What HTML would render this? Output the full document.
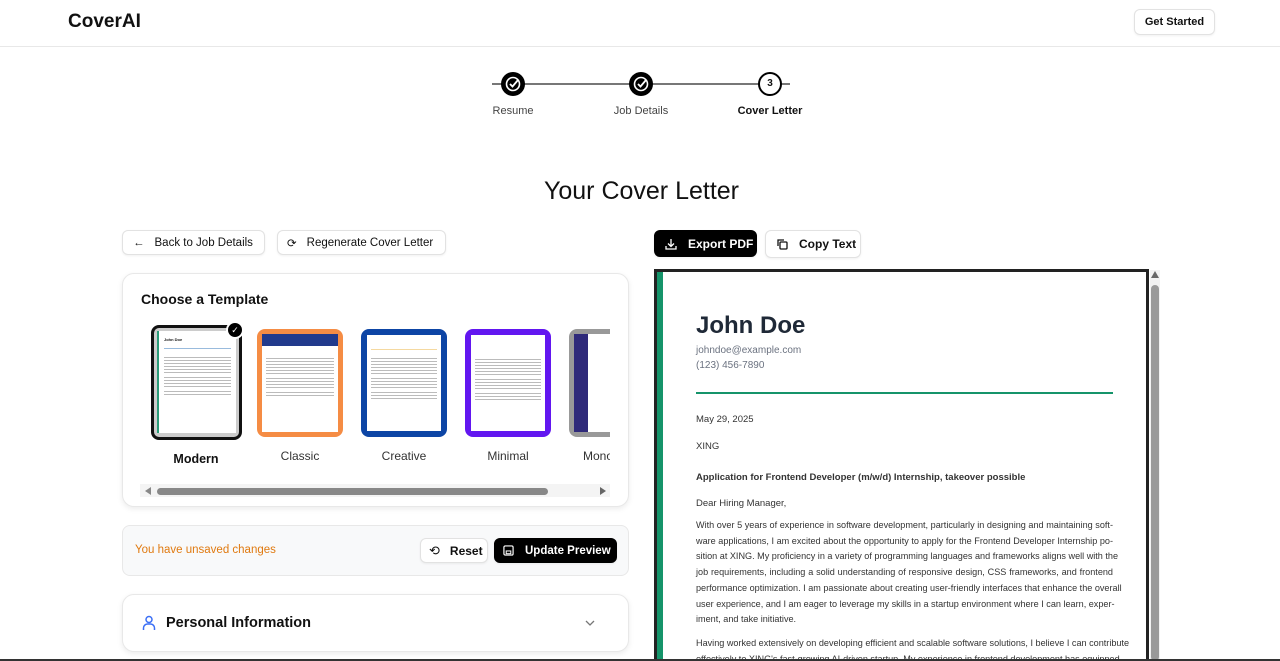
<!DOCTYPE html>
<html><head><meta charset="utf-8"><style>
*{box-sizing:border-box;margin:0;padding:0}
html,body{width:1280px;height:661px;overflow:hidden}
body{background:#fff;font-family:"Liberation Sans",sans-serif;color:#111;position:relative}
.a{position:absolute}
.btn{position:absolute;border:1px solid #e2e2e2;border-radius:6px;background:#fff;font-size:12px;font-weight:bold;display:flex;align-items:center;box-shadow:0 1px 2px rgba(0,0,0,.06);white-space:nowrap}
.card{position:absolute;border:1px solid #e8e8e8;border-radius:12px;background:#fff;box-shadow:0 2px 6px rgba(0,0,0,.08)}
.th{position:absolute;border-radius:8px;overflow:hidden}
.pg{position:absolute;background:#fff}
.ln{height:1px;background:#bbb;margin-bottom:2px}
.lbl{position:absolute;font-size:12px;color:#333;text-align:center;width:90px}
.ltr{position:absolute;left:696px;width:417px;font-size:9.1px;color:#333;line-height:15.7px}
.ltr div{text-align:justify;text-align-last:justify;white-space:nowrap}
.ltr div.l{text-align-last:left}
</style></head><body>
<div class="a" style="left:68px;top:11px;font-size:19px;font-weight:bold">CoverAI</div>
<div class="btn" style="left:1134px;top:9px;width:81px;height:26px;justify-content:center;font-size:11px">Get Started</div>
<div class="a" style="left:0;top:46px;width:1280px;height:1px;background:#e8e8e8"></div>

<div class="a" style="left:492px;top:83px;width:298px;height:2px;background:#777"></div>
<svg class="a" style="left:501px;top:72px" width="24" height="24" viewBox="0 0 24 24"><circle cx="12" cy="12" r="12" fill="#000"/><circle cx="12" cy="12" r="6.5" fill="none" stroke="#fff" stroke-width="1.6"/><path d="M9 12l2.5 2.5L17 8" fill="none" stroke="#fff" stroke-width="1.8"/></svg>
<svg class="a" style="left:629px;top:72px" width="24" height="24" viewBox="0 0 24 24"><circle cx="12" cy="12" r="12" fill="#000"/><circle cx="12" cy="12" r="6.5" fill="none" stroke="#fff" stroke-width="1.6"/><path d="M9 12l2.5 2.5L17 8" fill="none" stroke="#fff" stroke-width="1.8"/></svg>
<div class="a" style="left:758px;top:72px;width:24px;height:24px;border-radius:50%;border:2px solid #000;background:#fff;font-size:10px;font-weight:bold;text-align:center;line-height:20px">3</div>
<div class="a" style="left:473px;top:105px;width:80px;text-align:center;font-size:11px;color:#444">Resume</div>
<div class="a" style="left:601px;top:105px;width:80px;text-align:center;font-size:11px;color:#444">Job Details</div>
<div class="a" style="left:725px;top:105px;width:90px;text-align:center;font-size:11px;font-weight:bold;color:#111">Cover Letter</div>

<div class="a" style="left:0;top:177px;width:1283px;text-align:center;font-size:25px">Your Cover Letter</div>

<div class="btn" style="left:122px;top:230px;width:143px;height:25px;padding-left:10px;font-weight:normal;font-size:11.5px"><span style="margin-right:10px">&#8592;</span>Back to Job Details</div>
<div class="btn" style="left:277px;top:230px;width:169px;height:25px;padding-left:9px;font-weight:normal;font-size:11.5px"><span style="margin-right:10px">&#10227;</span>Regenerate Cover Letter</div>

<div class="card" style="left:122px;top:273px;width:507px;height:234px"></div>
<div class="a" style="left:141px;top:291px;font-size:14px;font-weight:bold">Choose a Template</div>
<div class="th" style="left:151px;top:325px;width:91px;height:115px;border:3px solid #111;background:#ccc;padding:3px 3px 5px 3px">
 <div class="pg" style="left:3px;top:3px;width:79px;height:102px;border-left:2px solid #2a9d7a;padding:6px 5px"><div style="font-size:4px;font-weight:bold">John Doe</div><div style="height:1px;background:#9bd;margin:6px 0 8px"></div><div class="ln"></div><div class="ln"></div><div class="ln"></div><div class="ln"></div><div class="ln"></div><div class="ln"></div><div class="ln" style="margin-top:4px"></div><div class="ln"></div><div class="ln"></div><div class="ln"></div><div class="ln" style="margin-top:4px"></div><div class="ln"></div></div></div>
<div class="a" style="left:226px;top:321px;width:18px;height:18px;border-radius:50%;background:#000;border:2px solid #fff;color:#fff;font-size:9px;text-align:center;line-height:14px">&#10003;</div>
<div class="th" style="left:257px;top:329px;width:86px;height:108px;background:#f58c44;padding:5px"><div class="pg" style="left:5px;top:5px;width:76px;height:98px;padding:0"><div style="height:12px;background:#213a8c"></div><div style="padding:12px 4px"><div class="ln"></div><div class="ln"></div><div class="ln"></div><div class="ln"></div><div class="ln"></div><div class="ln"></div><div class="ln" style="margin-top:4px"></div><div class="ln"></div><div class="ln"></div><div class="ln"></div><div class="ln" style="margin-top:4px"></div><div class="ln"></div></div></div></div>
<div class="th" style="left:361px;top:329px;width:86px;height:108px;background:#0d45a5"><div class="pg" style="left:6px;top:6px;width:74px;height:96px;padding:14px 4px"><div class="ln" style="background:#f5d9a0"></div><div class="ln" style="margin-top:8px"></div><div class="ln"></div><div class="ln"></div><div class="ln"></div><div class="ln"></div><div class="ln"></div><div class="ln" style="margin-top:4px"></div><div class="ln"></div><div class="ln"></div><div class="ln"></div><div class="ln" style="margin-top:4px"></div><div class="ln"></div><div class="ln"></div></div></div>
<div class="th" style="left:465px;top:329px;width:86px;height:108px;background:#6216f0"><div class="pg" style="left:6px;top:6px;width:74px;height:96px;padding:16px 4px"><div class="ln" style="margin-top:8px"></div><div class="ln"></div><div class="ln"></div><div class="ln"></div><div class="ln"></div><div class="ln"></div><div class="ln" style="margin-top:4px"></div><div class="ln"></div><div class="ln"></div><div class="ln"></div><div class="ln" style="margin-top:4px"></div><div class="ln"></div><div class="ln"></div></div></div>
<div class="th" style="left:569px;top:329px;width:41px;height:108px;background:#999;border-radius:8px 0 0 8px"><div class="pg" style="left:5px;top:5px;width:36px;height:98px;background:#fff"><div style="width:14px;height:98px;background:#2f2a7a"></div></div></div>
<div class="lbl" style="left:151px;top:452px;font-weight:bold;color:#111;font-size:12.5px">Modern</div>
<div class="lbl" style="left:255px;top:449px">Classic</div>
<div class="lbl" style="left:359px;top:449px">Creative</div>
<div class="lbl" style="left:463px;top:449px">Minimal</div>
<div class="a" style="left:583px;top:449px;font-size:12px;color:#333;width:27px;overflow:hidden;white-space:nowrap">Mono</div>
<div class="a" style="left:140px;top:484px;width:470px;height:13px;background:#f4f4f4"></div>
<div class="a" style="left:145px;top:487px;border-right:6px solid #888;border-top:4px solid transparent;border-bottom:4px solid transparent"></div>
<div class="a" style="left:600px;top:487px;border-left:6px solid #666;border-top:4px solid transparent;border-bottom:4px solid transparent"></div>
<div class="a" style="left:157px;top:488px;width:391px;height:7px;border-radius:4px;background:#888"></div>

<div class="a" style="left:122px;top:525px;width:507px;height:51px;border:1px solid #e8e8e8;border-radius:8px;background:#f8f9fa"></div>
<div class="a" style="left:135px;top:544px;font-size:11.5px;color:#e07a10">You have unsaved changes</div>
<div class="btn" style="left:420px;top:538px;width:68px;height:25px;padding-left:8px"><span style="margin-right:10px;font-weight:normal;font-size:13px">&#10226;</span>Reset</div>
<div class="btn" style="left:494px;top:538px;width:123px;height:25px;padding-left:8px;background:#000;color:#fff;border-color:#000;font-size:11.5px"><svg width="11" height="11" viewBox="0 0 12 12" style="margin-right:11px"><rect x="1" y="1" width="10" height="10" rx="1.5" fill="none" stroke="#fff" stroke-width="1.3"/><rect x="3.5" y="6.5" width="5" height="3" fill="none" stroke="#fff" stroke-width="1.1"/></svg>Update Preview</div>

<div class="card" style="left:122px;top:594px;width:507px;height:58px"></div>
<svg class="a" style="left:142px;top:615px" width="14" height="16" viewBox="0 0 14 16"><circle cx="7" cy="4.5" r="3" fill="none" stroke="#3b6ff5" stroke-width="1.5"/><path d="M1.5 15v-2a4 4 0 0 1 4-4h3a4 4 0 0 1 4 4v2" fill="none" stroke="#3b6ff5" stroke-width="1.5"/></svg>
<div class="a" style="left:166px;top:615px;font-size:14.5px;font-weight:bold">Personal Information</div>
<svg class="a" style="left:584px;top:619px" width="12" height="8" viewBox="0 0 12 8"><path d="M2 2l4 4 4-4" fill="none" stroke="#777" stroke-width="1.3"/></svg>

<div class="btn" style="left:654px;top:230px;width:103px;height:27px;background:#000;color:#fff;border-color:#000;padding-left:10px"><svg width="12" height="12" viewBox="0 0 12 12" style="margin-right:11px"><path d="M6 1v7M3 5.5L6 8.5 9 5.5M1 8v3h10V8" fill="none" stroke="#fff" stroke-width="1.3"/></svg>Export PDF</div>
<div class="btn" style="left:765px;top:230px;width:96px;height:28px;padding-left:10px"><svg width="12" height="12" viewBox="0 0 12 12" style="margin-right:11px"><rect x="4" y="4" width="7" height="7" rx="1" fill="none" stroke="#111" stroke-width="1.3"/><path d="M2 8V2h6" fill="none" stroke="#111" stroke-width="1.3"/></svg>Copy Text</div>

<div class="a" style="left:654px;top:269px;width:495px;height:392px;border:3px solid #222;border-bottom:none;background:#fff"></div>
<div class="a" style="left:657px;top:272px;width:6px;height:389px;background:#15946a"></div>
<div class="a" style="left:1150px;top:270px;width:10px;height:391px;background:#f1f1f1"></div>
<div class="a" style="left:1151px;top:271px;border-bottom:7px solid #666;border-left:4px solid transparent;border-right:4px solid transparent"></div>
<div class="a" style="left:1151px;top:285px;width:8px;height:376px;border-radius:4px;background:#999"></div>

<div class="a" style="left:696px;top:312px;font-size:24px;font-weight:bold;color:#1f2937">John Doe</div>
<div class="a" style="left:696px;top:345px;font-size:10px;color:#6b7280">johndoe@example.com</div>
<div class="a" style="left:696px;top:360px;font-size:10px;color:#6b7280">(123) 456-7890</div>
<div class="a" style="left:696px;top:392px;width:417px;height:2px;background:#15946a"></div>
<div class="a" style="left:696px;top:414px;font-size:9.5px;color:#333">May 29, 2025</div>
<div class="a" style="left:696px;top:441px;font-size:9.5px;color:#333">XING</div>
<div class="a" style="left:696px;top:472px;font-size:9.5px;font-weight:bold;color:#333">Application for Frontend Developer (m/w/d) Internship, takeover possible</div>
<div class="a" style="left:696px;top:498px;font-size:9.5px;color:#333">Dear Hiring Manager,</div>
<div class="ltr" style="top:518px">
<div>With over 5 years of experience in software development, particularly in designing and maintaining soft-</div>
<div>ware applications, I am excited about the opportunity to apply for the Frontend Developer Internship po-</div>
<div>sition at XING. My proficiency in a variety of programming languages and frameworks aligns well with the</div>
<div>job requirements, including a solid understanding of responsive design, CSS frameworks, and frontend</div>
<div>performance optimization. I am passionate about creating user-friendly interfaces that enhance the overall</div>
<div>user experience, and I am eager to leverage my skills in a startup environment where I can learn, exper-</div>
<div class="l">iment, and take initiative.</div>
</div>
<div class="ltr" style="top:636px">
<div>Having worked extensively on developing efficient and scalable software solutions, I believe I can contribute</div>
<div>effectively to XING's fast-growing AI-driven startup. My experience in frontend development has equipped</div>
</div>
<div class="a" style="left:0;top:659px;width:1280px;height:2px;background:#333"></div>
</body></html>
